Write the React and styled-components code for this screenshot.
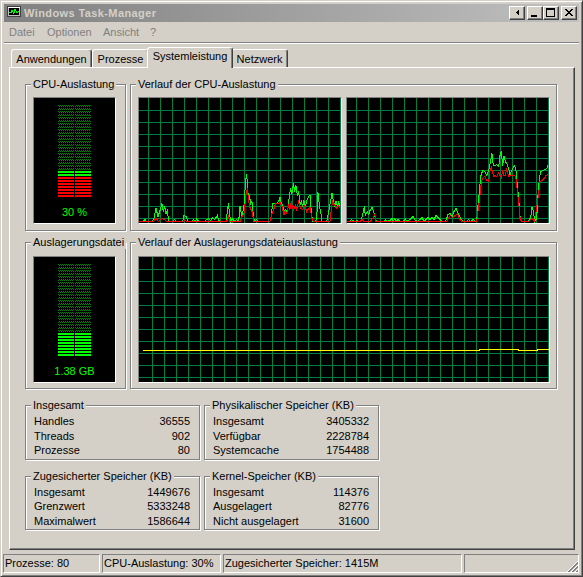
import React from 'react';
import styled, { createGlobalStyle } from 'styled-components';

const GlobalStyle = createGlobalStyle`
  html, body {
    margin: 0;
    padding: 0;
    background: #d4d0c8;
  }
  body {
    font-family: "Liberation Sans", Arial, sans-serif;
    font-size: 11px;
    color: #000;
  }
  * {
    box-sizing: border-box;
  }
`;

const GRID = '#008040';

const Window = styled.div`
  width: 583px;
  height: 577px;
  background: #d4d0c8;
  border: 1px solid;
  border-color: #d4d0c8 #404040 #404040 #d4d0c8;
  box-shadow: inset 1px 1px #fff, inset -1px -1px #808080;
  padding: 3px;
  display: flex;
  flex-direction: column;
  overflow: hidden;
`;

const TitleBar = styled.div`
  flex: none;
  height: 18px;
  display: flex;
  align-items: center;
  padding: 0 2px 0 3px;
  background: linear-gradient(to right, #808080, #c0c0c0);
`;

const TitleText = styled.span`
  flex: 1;
  margin-left: 3px;
  color: #d4d0c8;
  font-weight: bold;
  letter-spacing: 0.4px;
  line-height: 18px;
  white-space: nowrap;
`;

const CaptionButton = styled.div`
  width: 16px;
  height: 14px;
  margin-left: ${(p) => p.$gap || 0}px;
  background: #d4d0c8;
  border: 1px solid;
  border-color: #fff #404040 #404040 #fff;
  box-shadow: inset -1px -1px #808080;
`;

const Glyph = styled.svg`
  display: block;
`;

const MenuBar = styled.div`
  flex: none;
  height: 20px;
  display: flex;
`;

const MenuItem = styled.span`
  width: ${(p) => p.$w}px;
  padding-left: 5px;
  line-height: 20px;
  color: #808080;
`;

const Separator = styled.div`
  flex: none;
  height: 2px;
  border-top: 1px solid #808080;
  border-bottom: 1px solid #fff;
`;

const TabArea = styled.div`
  flex: none;
  padding: 3px 0 0 5px;
  width: 570px;
`;

const TabStrip = styled.div`
  height: 20px;
  display: flex;
  align-items: flex-end;
  padding-left: 2px;
  position: relative;
  z-index: 1;
`;

const Tab = styled.div`
  width: ${(p) => p.$w + (p.$active ? 4 : 0)}px;
  height: ${(p) => (p.$active ? 21 : 18)}px;
  margin: ${(p) => (p.$active ? '0 -2px -1px' : '0')};
  position: relative;
  z-index: ${(p) => (p.$active ? 2 : 1)};
  background: #d4d0c8;
  border: 1px solid;
  border-bottom: none;
  border-color: #fff #404040 transparent #fff;
  border-radius: 3px 3px 0 0;
  box-shadow: inset -1px 0 #808080;
  text-align: center;
  line-height: ${(p) => (p.$active ? 17 : 19)}px;
  white-space: nowrap;
`;

const Panel = styled.div`
  width: 566px;
  height: 483px;
  border: 1px solid;
  border-color: #fff #404040 #404040 #fff;
  box-shadow: inset -1px -1px #808080;
  padding: 16px 0 0 15px;
`;

const Row = styled.div`
  display: grid;
  grid-template-columns: ${(p) => p.$cols};
  column-gap: 4px;
  row-gap: 16px;
  margin-top: ${(p) => p.$top || 0}px;
`;

const Group = styled.div`
  position: relative;
  height: ${(p) => (p.$h ? `${p.$h}px` : 'auto')};
  border: 1px solid #808080;
  box-shadow: inset 1px 1px #fff, 1px 1px #fff;
  padding: ${(p) => p.$pad || '0'};
  display: ${(p) => (p.$flex ? 'flex' : 'block')};
  gap: 4px;
  align-items: flex-start;
`;

const Legend = styled.span`
  position: absolute;
  left: 5px;
  top: -7px;
  padding: 0 2px;
  background: #d4d0c8;
  line-height: 13px;
  white-space: nowrap;
`;

const Meter = styled.div`
  width: 83px;
  height: 127px;
  background: #000;
  border: 1px solid;
  border-color: #808080 #fff #fff #808080;
  display: flex;
  flex-direction: column;
  align-items: center;
  padding-top: 7px;
`;

const BarsSvg = styled.svg`
  display: block;
`;

const MeterLabel = styled.div`
  margin-top: 9px;
  color: #00ff00;
  line-height: 13px;
  white-space: nowrap;
`;

const GraphBox = styled.div`
  width: ${(p) => p.$w}px;
  height: 127px;
  background: #000;
  border: 1px solid;
  border-color: #808080 #fff #fff #808080;
`;

const GraphSvg = styled.svg`
  display: block;
`;

const StatRow = styled.div`
  display: flex;
  justify-content: space-between;
  line-height: 14.5px;
  white-space: nowrap;
`;

const StatusBar = styled.div`
  flex: none;
  height: 19px;
  display: flex;
  gap: 2px;
  margin: 4px 0 0 -1px;
`;

const StatusCell = styled.div`
  position: relative;
  width: ${(p) => (p.$w ? `${p.$w}px` : 'auto')};
  flex: ${(p) => (p.$w ? 'none' : '1')};
  border: 1px solid;
  border-color: #808080 #fff #fff #808080;
  padding-left: 1px;
  line-height: 17px;
  white-space: nowrap;
  overflow: hidden;
`;

const Grip = styled.svg`
  position: absolute;
  right: 0;
  bottom: 0;
  display: block;
`;

// curves read off the reference, in 3x zoom coordinates
const g1Green = [[27,408],[40,408],[45,402],[50,408],[65,408],[72,400],[78,370],[84,395],[90,375],[96,355],[100,380],[104,365],[108,385],[112,375],[116,408],[130,408],[133,404],[140,408],[158,408],[162,390],[168,395],[174,408],[185,408],[190,402],[196,408],[200,400],[206,408],[225,408],[230,402],[236,400],[242,405],[248,398],[254,404],[262,390],[266,405],[272,408],[288,408],[292,380],[295,355],[298,380],[302,408],[308,400],[314,408],[320,402],[326,408],[330,365],[336,395],[342,360],[346,300],[349,268],[352,290],[355,340],[358,330],[362,355],[366,350],[370,390],[374,408],[380,402],[386,408],[420,408],[424,390],[428,355],[440,355],[446,350],[450,338],[454,355],[458,360],[462,385],[466,372],[470,378],[474,370],[478,330],[482,310],[486,325],[490,295],[494,318],[498,300],[502,330],[506,320],[510,360],[514,345],[518,365],[522,345],[526,370],[530,345],[536,335],[540,330],[544,380],[548,408],[556,408],[560,400],[564,322],[568,360],[572,380],[576,408],[590,408],[596,380],[602,345],[606,325],[610,345],[614,360],[618,350],[622,365],[626,352],[630,360]];
const g1Red = [[27,408],[70,408],[78,400],[86,408],[94,400],[104,402],[110,408],[160,408],[165,405],[172,408],[290,408],[295,395],[300,408],[330,408],[336,395],[342,385],[348,330],[352,310],[356,350],[360,368],[366,380],[372,408],[420,408],[426,385],[432,370],[436,355],[442,355],[450,352],[456,365],[462,388],[466,376],[470,385],[476,360],[480,372],[484,350],[490,375],[496,360],[500,372],[506,350],[512,370],[518,372],[524,360],[530,380],[536,370],[540,365],[546,400],[550,408],[600,408],[604,370],[608,350],[614,362],[620,370],[626,362],[630,368]];
const g2Green = [[22,408],[30,408],[35,404],[42,408],[52,405],[58,408],[64,402],[70,380],[73,365],[76,390],[82,378],[86,388],[90,375],[96,368],[100,375],[104,390],[108,405],[114,408],[130,408],[136,404],[140,408],[150,405],[156,400],[160,408],[164,400],[168,408],[174,402],[180,408],[190,408],[196,400],[200,408],[210,404],[216,398],[220,394],[224,404],[232,408],[240,404],[246,398],[252,408],[258,402],[264,396],[270,404],[276,398],[282,404],[288,390],[294,396],[300,404],[306,408],[316,408],[320,400],[324,388],[330,384],[336,394],[342,380],[348,370],[352,380],[358,392],[364,404],[370,408],[380,408],[386,404],[392,408],[400,404],[406,408],[410,408],[414,360],[418,320],[422,275],[428,255],[434,260],[440,270],[446,255],[452,225],[456,205],[460,240],[464,242],[470,238],[476,245],[480,210],[484,200],[488,240],[492,215],[496,228],[500,235],[506,250],[510,268],[514,260],[518,250],[524,240],[528,255],[532,300],[536,340],[540,395],[544,408],[560,408],[566,405],[572,396],[576,366],[580,375],[584,408],[590,400],[594,330],[598,280],[602,260],[608,255],[614,252],[620,250],[624,240]];
const g2Red = [[22,408],[60,408],[66,404],[72,408],[90,408],[98,400],[104,388],[108,408],[320,408],[326,396],[332,390],[338,398],[346,390],[352,385],[358,400],[364,408],[410,408],[416,360],[420,330],[424,290],[428,280],[434,275],[440,285],[446,290],[450,260],[454,245],[458,265],[462,275],[466,270],[470,275],[476,262],[480,270],[484,278],[488,255],[492,270],[496,272],[500,250],[506,275],[512,272],[518,270],[524,272],[528,280],[532,320],[536,350],[540,398],[544,408],[566,408],[572,402],[576,400],[580,406],[584,408],[594,340],[600,290],[606,285],[612,280],[618,270],[624,268]];

const toInner = (pts, x0) => pts.map(([x, y]) => [(x - x0) / 3, Math.round((y - 40) / 3) + 0.5]);

const pageLine = [[4,93.5],[340,93.5],[340,92.5],[379,92.5],[379,93.5],[398,93.5],[398,92.5],[410,92.5]];

const stats = [
  { title: 'Insgesamt', rows: [['Handles', '36555'], ['Threads', '902'], ['Prozesse', '80']] },
  { title: 'Physikalischer Speicher (KB)', rows: [['Insgesamt', '3405332'], ['Verfügbar', '2228784'], ['Systemcache', '1754488']] },
  { title: 'Zugesicherter Speicher (KB)', rows: [['Insgesamt', '1449676'], ['Grenzwert', '5333248'], ['Maximalwert', '1586644']] },
  { title: 'Kernel-Speicher (KB)', rows: [['Insgesamt', '114376'], ['Ausgelagert', '82776'], ['Nicht ausgelagert', '31600']] },
];

const tabs = [
  { label: 'Anwendungen', w: 81 },
  { label: 'Prozesse', w: 57 },
  { label: 'Systemleistung', w: 82, active: true },
  { label: 'Netzwerk', w: 57 },
];

const AppIcon = () => (
  <Glyph width="14" height="14" shapeRendering="crispEdges">
    <rect x="0.5" y="0.5" width="13" height="10" fill="#c0c0c0" stroke="#404040" />
    <rect x="1" y="1" width="12" height="1" fill="#fff" />
    <rect x="2" y="2" width="10" height="7" fill="#000" />
    <polyline points="2,6.5 4,6.5 5,4.5 7,7.5 8,3.5 10,6.5 12,5.5" fill="none" stroke="#00ff00" />
    <rect x="5" y="11" width="4" height="1" fill="#808080" />
    <rect x="2" y="12" width="10" height="2" fill="#808080" />
  </Glyph>
);

const Pixels = ({ cells }) => (
  <Glyph width="14" height="12" shapeRendering="crispEdges">
    {cells.map(([x, y, w, h], i) => (
      <rect key={i} x={x} y={y} width={w} height={h} fill="#000" />
    ))}
  </Glyph>
);

const closeCells = Array.from({ length: 7 }, (_, i) => [
  [3 + i, 2 + i, 2, 1],
  [9 - i, 2 + i, 2, 1],
]).flat();

// dotted (unlit) rows are a checkerboard of single dark green pixels
const dimPath = (rows) => {
  let d = '';
  rows.forEach((i) => {
    for (let r = 0; r < 2; r += 1) {
      const y = i * 3 + r;
      for (let x = 0; x < 33; x += 1) {
        if (x !== 16 && (x + y) % 2 === 0) d += `M${x} ${y}h1v1h-1z`;
      }
    }
  });
  return d;
};

const MeterBars = ({ lit, red = 0 }) => {
  const rows = 31;
  const dim = [];
  const bars = [];
  for (let i = 0; i < rows; i += 1) {
    const fromBottom = rows - 1 - i;
    if (fromBottom < lit) {
      bars.push({ i, fill: fromBottom < red ? '#ff0000' : '#00ff00' });
    } else {
      dim.push(i);
    }
  }
  return (
    <BarsSvg width="33" height="92" shapeRendering="crispEdges">
      <path d={dimPath(dim)} fill="#008000" />
      {bars.map(({ i, fill }) =>
        [0, 17].map((x) => (
          <rect key={`${i}-${x}`} x={x} y={i * 3} width="16" height="2" fill={fill} />
        ))
      )}
    </BarsSvg>
  );
};

const Graph = ({ width, offX, lines }) => {
  const w = width - 2;
  const h = 125;
  const vs = [];
  for (let x = offX; x < w; x += 12) vs.push(x);
  const hs = [];
  for (let y = 12; y < h; y += 12) hs.push(y);
  return (
    <GraphBox $w={width}>
      <GraphSvg width={w} height={h} shapeRendering="crispEdges">
        {vs.map((x) => (
          <line key={`v${x}`} x1={x + 0.5} y1="0" x2={x + 0.5} y2={h} stroke={GRID} />
        ))}
        {hs.map((y) => (
          <line key={`h${y}`} x1="0" y1={y + 0.5} x2={w} y2={y + 0.5} stroke={GRID} />
        ))}
        {lines.map((l, i) => (
          <polyline
            key={i}
            points={l.points.map((p) => p.join(',')).join(' ')}
            fill="none"
            stroke={l.color}
          />
        ))}
      </GraphSvg>
    </GraphBox>
  );
};

const SizeGrip = () => (
  <Grip width="12" height="12" shapeRendering="crispEdges">
    {[0, 4, 8].map((o) => (
      <g key={o}>
        <line x1={o + 1} y1="12" x2="12" y2={o + 1} stroke="#fff" />
        <line x1={o + 2} y1="12" x2="12" y2={o + 2} stroke="#808080" />
        <line x1={o + 3} y1="12" x2="12" y2={o + 3} stroke="#808080" />
      </g>
    ))}
  </Grip>
);

export default function App() {
  return (
    <>
      <GlobalStyle />
      <Window>
        <TitleBar>
          <AppIcon />
          <TitleText>Windows Task-Manager</TitleText>
          <CaptionButton>
            <Pixels cells={[[6, 5, 1, 1], [7, 4, 1, 3], [8, 3, 1, 5]]} />
          </CaptionButton>
          <CaptionButton $gap={2}>
            <Pixels cells={[[3, 8, 6, 2]]} />
          </CaptionButton>
          <CaptionButton>
            <Pixels cells={[[2, 1, 9, 2], [2, 3, 1, 6], [10, 3, 1, 6], [2, 9, 9, 1]]} />
          </CaptionButton>
          <CaptionButton $gap={2}>
            <Pixels cells={closeCells} />
          </CaptionButton>
        </TitleBar>

        <MenuBar>
          <MenuItem $w={38}>Datei</MenuItem>
          <MenuItem $w={56}>Optionen</MenuItem>
          <MenuItem $w={47}>Ansicht</MenuItem>
          <MenuItem $w={20}>?</MenuItem>
        </MenuBar>
        <Separator />

        <TabArea>
          <TabStrip>
            {tabs.map((t) => (
              <Tab key={t.label} $w={t.w} $active={t.active}>
                {t.label}
              </Tab>
            ))}
          </TabStrip>
          <Panel>
            <Row $cols="101px 427px">
              <Group $h={147} $pad="12px 0 0 7px">
                <Legend>CPU-Auslastung</Legend>
                <Meter>
                  <MeterBars lit={9} red={7} />
                  <MeterLabel>30 %</MeterLabel>
                </Meter>
              </Group>
              <Group $h={147} $pad="12px 0 0 7px" $flex>
                <Legend>Verlauf der CPU-Auslastung</Legend>
                <Graph
                  width={204}
                  offX={9}
                  lines={[
                    { color: '#00ff00', points: toInner(g1Green, 27) },
                    { color: '#ff0000', points: toInner(g1Red, 27) },
                  ]}
                />
                <Graph
                  width={204}
                  offX={9}
                  lines={[
                    { color: '#00ff00', points: toInner(g2Green, 21) },
                    { color: '#ff0000', points: toInner(g2Red, 21) },
                  ]}
                />
              </Group>
            </Row>

            <Row $cols="101px 427px" $top={11}>
              <Group $h={147} $pad="13px 0 0 7px">
                <Legend>Auslagerungsdatei</Legend>
                <Meter>
                  <MeterBars lit={8} />
                  <MeterLabel>1.38 GB</MeterLabel>
                </Meter>
              </Group>
              <Group $h={147} $pad="13px 0 0 7px" $flex>
                <Legend>Verlauf der Auslagerungsdateiauslastung</Legend>
                <Graph width={412} offX={13} lines={[{ color: '#ffff00', points: pageLine }]} />
              </Group>
            </Row>

            <Row $cols="175px 175px" $top={16}>
              {stats.map((s) => (
                <Group key={s.title} $pad="8px 9px 1px 8px">
                  <Legend>{s.title}</Legend>
                  {s.rows.map(([label, value]) => (
                    <StatRow key={label}>
                      <span>{label}</span>
                      <span>{value}</span>
                    </StatRow>
                  ))}
                </Group>
              ))}
            </Row>
          </Panel>
        </TabArea>

        <StatusBar>
          <StatusCell $w={97}>Prozesse: 80</StatusCell>
          <StatusCell $w={119}>CPU-Auslastung: 30%</StatusCell>
          <StatusCell $w={239}>Zugesicherter Speicher: 1415M</StatusCell>
          <StatusCell>
            <SizeGrip />
          </StatusCell>
        </StatusBar>
      </Window>
    </>
  );
}
